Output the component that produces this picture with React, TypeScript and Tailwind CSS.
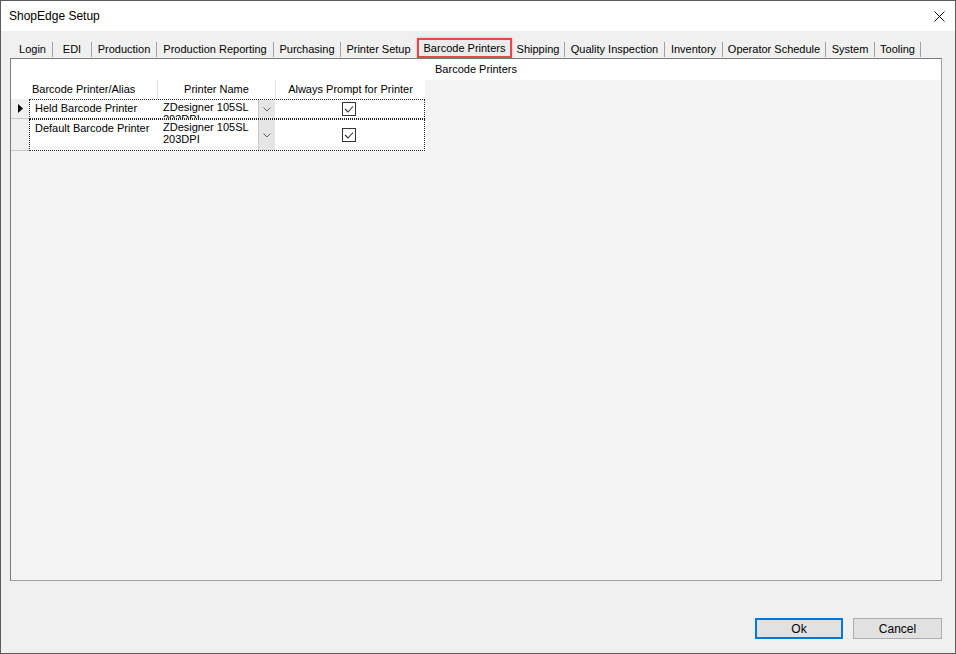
import React from "react";

const tabs: { label: string; w: number; active?: boolean }[] = [
  { label: "Login", w: 40 },
  { label: "EDI", w: 39 },
  { label: "Production", w: 65 },
  { label: "Production Reporting", w: 117 },
  { label: "Purchasing", w: 67 },
  { label: "Printer Setup", w: 75 },
  { label: "Barcode Printers", w: 96, active: true },
  { label: "Shipping", w: 53 },
  { label: "Quality Inspection", w: 100 },
  { label: "Inventory", w: 58 },
  { label: "Operator Schedule", w: 103 },
  { label: "System", w: 49 },
  { label: "Tooling", w: 46 },
];

const rows = [
  { alias: "Held Barcode Printer", printer: ["ZDesigner 105SL", "203DPI"], h: 20, current: true },
  { alias: "Default Barcode Printer", printer: ["ZDesigner 105SL", "203DPI"], h: 32, current: false },
];

function CheckBox() {
  return (
    <div className="w-[14px] h-[14px] border border-[#333333] bg-white flex items-center justify-center">
      <svg width="12" height="12" viewBox="0 0 12 12">
        <path d="M2 6 L5 9 L10 3.5" fill="none" stroke="#333333" strokeWidth="1.1" />
      </svg>
    </div>
  );
}

function DropButton() {
  return (
    <div className="w-[17px] h-full bg-[#e5e5e5] border-l border-[#c8c8c8] flex items-center justify-center shrink-0">
      <svg width="8" height="5" viewBox="0 0 8 5">
        <path d="M0.5 0.5 L4 4 L7.5 0.5" fill="none" stroke="#606060" strokeWidth="1" />
      </svg>
    </div>
  );
}

export default function App() {
  return (
    <div className="w-[956px] h-[654px] border border-[#5b5b5b] bg-[#f0f0f0] flex flex-col font-['Liberation_Sans',Arial,sans-serif] text-[11px] text-black overflow-hidden">
      {/* Title bar */}
      <div className="h-[30px] bg-white flex items-center justify-between pl-[8px] pr-[10px] shrink-0">
        <span className="text-[12px]">ShopEdge Setup</span>
        <svg width="11" height="11" viewBox="0 0 11 11">
          <path d="M0.5 0.5 L10.5 10.5 M10.5 0.5 L0.5 10.5" stroke="#111" strokeWidth="1" />
        </svg>
      </div>

      {/* Tab strip */}
      <div className="mt-[7px] h-[20px] flex pl-[12px] shrink-0">
        {tabs.map((t, i) => {
          const nextActive = tabs[i + 1]?.active;
          if (t.active) {
            return (
              <div key={t.label} style={{ width: t.w }} className="h-[20px] pl-px">
                <div className="h-full border-2 border-[#e24a4a] bg-[#ebebeb] shadow-[0_0_2px_rgba(226,74,74,0.5)] flex items-center justify-center pt-px">
                  {t.label}
                </div>
              </div>
            );
          }
          return (
            <div key={t.label} style={{ width: t.w }} className="h-[20px] flex items-center pt-[2px]">
              <span className="flex-1 text-center whitespace-nowrap">{t.label}</span>
              {!nextActive && <div className="w-px h-[15px] bg-[#a0a0a0] self-end mb-[1px]" />}
            </div>
          );
        })}
      </div>

      {/* Tab panel */}
      <div className="ml-[9px] w-[932px] h-[523px] border border-[#a0a0a0] border-t-[#7a7a7a] border-l-[#7a7a7a] bg-[#f4f4f4] flex flex-col shrink-0">
        <div className="h-[21px] bg-white flex items-center justify-center">Barcode Printers</div>

        {/* Grid */}
        <div className="w-[414px] flex flex-col">
          <div className="h-[19px] bg-white flex">
            <div className="w-[18px]" />
            <div className="w-[128px] pl-[3px] flex items-center">Barcode Printer/Alias</div>
            <div className="w-[118px] border-l border-[#e3e3e3] flex items-center justify-center">Printer Name</div>
            <div className="w-[150px] border-l border-[#e3e3e3] flex items-center justify-center">Always Prompt for Printer</div>
          </div>
          {rows.map((r) => (
            <div key={r.alias} className="flex" style={{ height: r.h }}>
              <div className="w-[18px] bg-[#f0f0f0] border-b border-[#c8c8c8] flex items-center justify-center">
                {r.current && (
                  <svg width="5" height="9" viewBox="0 0 5 9">
                    <polygon points="0,0 5,4.5 0,9" fill="#000" />
                  </svg>
                )}
              </div>
              <div className="flex-1 flex bg-white border border-dotted border-[#222] overflow-hidden">
                <div className="w-[127px] pl-[5px] pt-[2px] leading-[13px] whitespace-nowrap">{r.alias}</div>
                <div className="w-[118px] flex overflow-hidden">
                  <div className="flex-1 pl-[6px] pt-[1px] leading-[12px] overflow-hidden whitespace-nowrap">
                    <div>{r.printer[0]}</div>
                    <div>{r.printer[1]}</div>
                  </div>
                  <DropButton />
                </div>
                <div className="flex-1 flex items-center justify-center pr-[1px]">
                  <CheckBox />
                </div>
              </div>
            </div>
          ))}
        </div>
      </div>

      {/* Buttons */}
      <div className="mt-[37px] flex justify-end gap-[10px] pr-[13px] text-[12px]">
        <button className="w-[88px] h-[21px] bg-[#e1e1e1] border border-[#0078d7] shadow-[inset_0_0_0_1px_#0078d7] flex items-center justify-center">
          Ok
        </button>
        <button className="w-[89px] h-[21px] bg-[#e1e1e1] border border-[#adadad] flex items-center justify-center">
          Cancel
        </button>
      </div>
    </div>
  );
}
